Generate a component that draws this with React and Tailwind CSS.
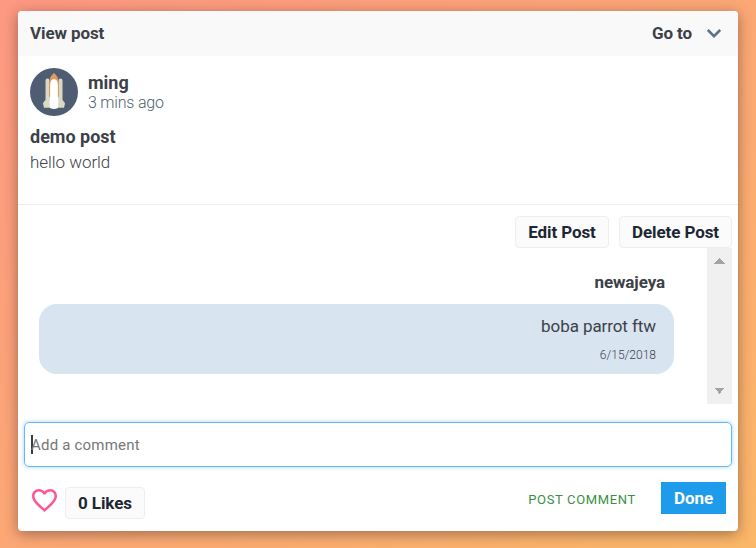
import React from "react";

function Avatar() {
  return (
    <svg viewBox="0 0 48 48" className="size-12 shrink-0">
      <circle cx="24" cy="24" r="24" fill="#4f5d73" />
      <path d="M15.500 12.500q0-2 2-2t2 2v20h-4zM28.500 12.500q0-2 2-2t2 2v20h-4z" fill="#d9d9c6" />
      <path d="M17 30q-1 2-2.600 3.200-1.400 1-1.400 2.600l1 4h6.500V28zM31 30q1 2 2.600 3.200 1.400 1 1.400 2.600l-1 4h-6.500V28z" fill="#d9d9c6" />
      <path d="M19 17q.3-9 5-12 4.700 3 5 12v11H19z" fill="#e0995e" />
      <path d="M20 40q-1-6 .1-11V17q.2-6 3.900-6t3.900 6v12q1.100 5 .1 11-4 1.800-8 0z" fill="#fff" />
    </svg>
  );
}

function Button({ children, className = "" }) {
  return (
    <button className={`h-8 rounded-[4px] border border-[#eeeeee] bg-[#fbfbfb] text-center text-[17px] leading-[30px] font-bold tracking-[-0.1px] text-[#1c2733] whitespace-nowrap ${className}`}>
      {children}
    </button>
  );
}

function Comments() {
  return (
    <div className="ml-1.5 mr-1.5 flex h-[156px]">
      <div className="flex-1 pt-[22px] pl-[15px] pr-[33px] text-right">
        <div className="pr-[9px] text-[17px] leading-6 font-bold tracking-[-0.1px]">newajeya</div>
        <div className="mt-[10px] h-[70px] rounded-[18px] bg-[#d8e4f0] pt-[10px] pr-[18px]">
          <div className="text-[17px] leading-6 tracking-[-0.08px]">boba parrot ftw</div>
          <div className="mt-[7px] text-[12px] leading-5 font-light">6/15/2018</div>
        </div>
      </div>
      <div className="flex w-[25px] flex-col items-center justify-between bg-[#f0f0f0] pt-[10px] pb-[10px]">
        <svg width="11" height="6" viewBox="0 0 11 6" shapeRendering="crispEdges"><path d="M0 6L5.500 0L11 6z" fill="#a3a3a3" /></svg>
        <svg width="11" height="6" viewBox="0 0 11 6" shapeRendering="crispEdges"><path d="M1 0h9L5.500 6z" fill="#a3a3a3" /></svg>
      </div>
    </div>
  );
}

export default function App() {
  return (
    <div className="h-[548px] w-[756px] overflow-hidden bg-[linear-gradient(to_bottom_right,#fd9882,#fbb768)] pt-[10.5px] pl-[18px] font-['Roboto',sans-serif] text-[#3c4148]">
      <div className="h-[520px] w-[720px] overflow-hidden rounded-[4px] bg-white shadow-[0_3px_14px_rgba(60,40,40,0.48)]">
        <header className="flex h-[45px] items-center justify-between bg-[#f9f9f9] pl-3 pr-[17px] text-[17px] font-bold tracking-[-0.1px]">
          <span className="pt-[1px]">View post</span>
          <span className="flex items-center gap-[15px]">
            <span className="pt-[1px]">Go to</span>
            <svg width="14" height="9" viewBox="0 0 14 9" fill="none" stroke="#597386" strokeWidth="2.600"><path d="M.8.900L7 7.100L13.200.900" /></svg>
          </span>
        </header>
        <section className="h-[149px] border-b border-[#eeeeee] px-3 pt-[12.500px]">
          <div className="flex gap-[10px]">
            <Avatar />
            <div className="pt-[5px]">
              <div className="text-[18px] leading-5 font-bold">ming</div>
              <div className="text-[16px] leading-5 font-light tracking-[-0.2px] text-[#4e5f6b]">3 mins ago</div>
            </div>
          </div>
          <div className="mt-[8px] text-[18px] leading-[26px] font-bold">demo post</div>
          <div className="text-[17px] leading-[25px] font-light tracking-[-0.05px]">hello world</div>
        </section>
        <div className="flex justify-end gap-[10px] pt-[11.500px] pr-1.5">
          <Button className="w-[94px]">Edit Post</Button>
          <Button className="w-[113px]">Delete Post</Button>
        </div>
        <Comments />
        <div className="mx-1.5 mt-[18px] flex h-[45px] items-center rounded-[5px] border border-[#65b9f2] pl-[6px] shadow-[0_0_4px_rgba(80,165,235,0.5)]">
          <span className="h-[19px] w-[2px] shrink-0 bg-[#343e48]" />
          <span className="-ml-[2px] pt-[2px] text-[15px] tracking-[0.2px] text-[#777777]">Add a comment</span>
        </div>
        <footer className="flex items-start pt-[15px] pl-[14px] pr-3">
          <svg width="25" height="23" viewBox="2 3 20 18.350" preserveAspectRatio="none" className="mt-[7px]" fill="#ff5594">
            <path d="M16.500 3c-1.740 0-3.410.810-4.500 2.090C10.910 3.810 9.240 3 7.500 3 4.420 3 2 5.420 2 8.500c0 3.780 3.400 6.860 8.550 11.540L12 21.350l1.450-1.320C18.600 15.360 22 12.280 22 8.500 22 5.420 19.580 3 16.500 3zm-4.400 15.550l-.100.100-.100-.100C7.140 14.240 4 11.390 4 8.500 4 6.500 5.500 5 7.500 5c1.540 0 3.040.990 3.570 2.360h1.870C13.460 5.990 14.960 5 16.500 5c2 0 3.500 1.500 3.500 3.500 0 2.890-3.140 5.740-7.900 10.050z" />
          </svg>
          <Button className="ml-2 mt-[5px] w-20">0 Likes</Button>
          <button className="ml-auto mt-[8px] text-[13px] leading-5 tracking-[0.65px] text-[#3a8f46]">POST COMMENT</button>
          <button className="ml-[25px] h-8 w-[65px] bg-[#1e9bea] pt-[1px] text-[17px] font-bold tracking-[-0.1px] text-white">Done</button>
        </footer>
      </div>
    </div>
  );
}
